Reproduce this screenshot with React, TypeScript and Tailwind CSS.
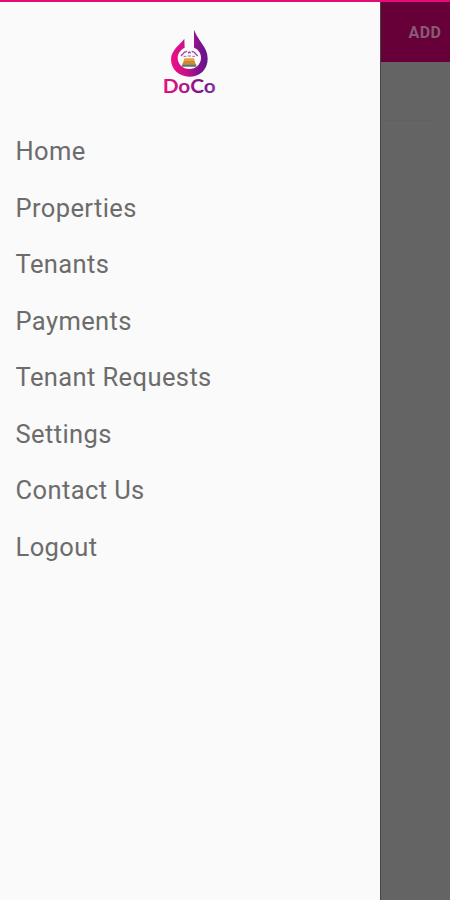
const menu = ["Home", "Properties", "Tenants", "Payments", "Tenant Requests", "Settings", "Contact Us", "Logout"];

function Logo() {
  return (
    <svg width="70" height="80" viewBox="0 0 210 240" role="img" aria-label="DoCo">
      <defs>
        <linearGradient id="brand" gradientUnits="userSpaceOnUse" x1="48" y1="0" x2="158" y2="0">
          <stop offset="0" stopColor="#ee0f83" />
          <stop offset="0.4" stopColor="#cb1088" />
          <stop offset="0.75" stopColor="#82128e" />
          <stop offset="1" stopColor="#611687" />
        </linearGradient>
        <linearGradient id="word" gradientUnits="userSpaceOnUse" x1="27" y1="0" x2="180" y2="0">
          <stop offset="0" stopColor="#e8107f" />
          <stop offset="0.45" stopColor="#ac168b" />
          <stop offset="0.75" stopColor="#701487" />
          <stop offset="1" stopColor="#8c329e" />
        </linearGradient>
      </defs>
      <path
        d="M88 50 C80 64 48 82 48 112 C48 143 72 164 103 164 C134 164 158 143 158 110 C158 74 132 62 117 23 L117 77 C130 82 138 93 138 107 C138 127 122 141 103 141 C84 141 68 127 68 107 C68 94 77 83 89 77 Z"
        fill="url(#brand)"
      />
      <path d="M78 102 L89 90 L96 88 M99 94 L103 90 L107 94 M110 88 L117 90 L128 102" fill="none" stroke="#a04aa5" strokeWidth="4" />
      <path d="M86 103 H94 M98 102 H108 M112 103 H120" stroke="#a760ac" strokeWidth="3" />
      <path d="M88 109 H117 L119 117 H86 Z" fill="#e9a03c" />
      <path d="M86 117 H119 L122 127 H82 Z" fill="#c88b35" />
      <path d="M82 127 H123 L125 134 H79 Z" fill="#6f7157" />
      <text x="23" y="213" textLength="159" lengthAdjust="spacingAndGlyphs" fill="url(#word)" className="font-['Lato',sans-serif] text-[57px] font-bold">
        DoCo
      </text>
    </svg>
  );
}

export default function App() {
  return (
    <div className="flex h-[900px] w-[450px] flex-col overflow-hidden bg-[#646464] font-['Roboto',sans-serif]">
      <div className="h-[2px] shrink-0 bg-[#e20c76]" />
      <div className="flex flex-1">
        <aside className="flex w-[380px] shrink-0 flex-col bg-[#fafafa]">
          <div className="flex h-[122px] justify-center pt-[20px]">
            <Logo />
          </div>
          <nav className="flex flex-col">
            {menu.map((item) => (
              <a key={item} className="flex h-[56.45px] items-center pl-[15.5px] text-[25.5px] leading-none tracking-[0.4px] text-[#6c6c6c]">
                {item}
              </a>
            ))}
          </nav>
        </aside>
        <main className="flex flex-1 flex-col border-l border-[#454545]">
          <header className="flex h-[60px] items-center justify-end bg-[#670038] pt-[2px] pr-[8.5px] text-[16px] font-bold tracking-[0.5px] text-[#875b73]">
            ADD
          </header>
          <div className="ml-[2px] mt-[58px] h-px w-[50px] bg-[#616161]" />
          <div className="ml-[2px] mt-[48px] h-px w-[50px] bg-[#626262]" />
        </main>
      </div>
    </div>
  );
}
